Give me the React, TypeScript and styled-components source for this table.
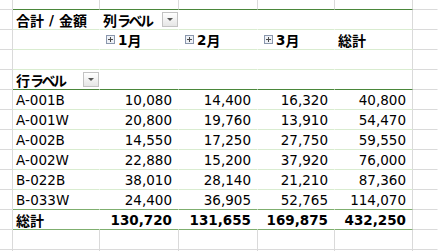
import styled, { createGlobalStyle } from "styled-components";

const GlobalStyle = createGlobalStyle`
  html, body {
    margin: 0;
    padding: 0;
    background: #ffffff;
    overflow: hidden;
  }
  body {
    font-family: "DejaVu Sans", "Noto Sans CJK JP", sans-serif;
    font-size: 13.5px;
    color: #000000;
  }
`;

type Line = "grid" | "light" | "dark" | "total";

const lineColors: Record<Line, string> = {
  grid: "#dadada",
  light: "#d9ecd0",
  dark: "#4a873a",
  total: "#7faf6f",
};

const Sheet = styled.div`
  width: 438px;
  height: 251px;
  overflow: hidden;
  display: flex;
  flex-direction: column;
`;

const Row = styled.div<{ $h: number }>`
  display: grid;
  grid-template-columns: 13px 87px 79px 79px 77px 78px 1fr;
  height: ${({ $h }) => $h}px;
  flex-shrink: 0;
`;

const Cell = styled.div<{
  $line: Line;
  $vline?: boolean;
  $align?: "left" | "right" | "split";
  $bold?: boolean;
}>`
  box-sizing: border-box;
  display: flex;
  align-items: center;
  justify-content: ${({ $align }) =>
    $align === "right" ? "flex-end" : $align === "split" ? "space-between" : "flex-start"};
  padding: ${({ $align }) => ($align === "right" ? "0 6px 0 0" : "0 0 0 3px")};
  border-bottom: 1px solid ${({ $line }) => lineColors[$line]};
  border-right: 1px solid ${({ $vline }) => ($vline ? lineColors.grid : "transparent")};
  font-weight: ${({ $bold }) => ($bold ? 700 : 400)};
  white-space: nowrap;
  overflow: visible;
  min-width: 0;
`;

const Jp = styled.span`
  font-family: "Noto Sans CJK JP", sans-serif;
  font-size: 14px;
  font-weight: 700;
  line-height: 1;
`;

const Kana = styled.span`
  letter-spacing: -2.5px;
  margin-right: 2px;
`;

const Slash = styled.span`
  font-family: "DejaVu Sans", sans-serif;
  font-weight: 700;
  padding: 0 5px;
`;

const Head = styled.span`
  display: flex;
  align-items: center;
  font-weight: 700;
`;

const DropButton = styled.span`
  box-sizing: border-box;
  width: 16px;
  height: 15px;
  margin-top: -1px;
  border: 1px solid #c3c3c3;
  background: linear-gradient(#ffffff, #e6e6e6);
  display: flex;
  align-items: center;
  justify-content: center;

  &::after {
    content: "";
    border-left: 3px solid transparent;
    border-right: 3px solid transparent;
    border-top: 3px solid #555555;
    margin-top: 1px;
  }
`;

const Expand = () => (
  <svg width="9" height="9" viewBox="0 0 9 9" style={{ margin: "0 3px 0 3px", flexShrink: 0 }}>
    <rect x="0.5" y="0.5" width="8" height="8" fill="#eef1f6" stroke="#8a97ad" />
    <path d="M2 4.5h5M4.5 2v5" stroke="#4a4a4a" strokeWidth="1" />
  </svg>
);

const data: [string, number, number, number, number][] = [
  ["A-001B", 10080, 14400, 16320, 40800],
  ["A-001W", 20800, 19760, 13910, 54470],
  ["A-002B", 14550, 17250, 27750, 59550],
  ["A-002W", 22880, 15200, 37920, 76000],
  ["B-022B", 38010, 28140, 21210, 87360],
  ["B-033W", 24400, 36905, 52765, 114070],
];

const totals = [130720, 131655, 169875, 432250];

const fmt = (n: number) => n.toLocaleString("en-US");

const GridRow = ({ h, line = "grid" }: { h: number; line?: Line }) => (
  <Row $h={h}>
    <Cell $line="grid" $vline />
    <Cell $line={line} $vline />
    <Cell $line={line} $vline />
    <Cell $line={line} $vline />
    <Cell $line={line} $vline />
    <Cell $line={line} $vline />
    <Cell $line="grid" />
  </Row>
);

const TableRow = ({ children }: { children: React.ReactNode }) => (
  <Row $h={20}>
    <Cell $line="grid" $vline />
    {children}
    <Cell $line="grid" />
  </Row>
);

export default function App() {
  return (
    <>
      <GlobalStyle />
      <Sheet>
        <GridRow h={10} line="dark" />

        <TableRow>
          <Cell $line="light">
            <Jp>合計</Jp>
            <Slash>/</Slash>
            <Jp>金額</Jp>
          </Cell>
          <Cell $line="light" $align="split">
            <Jp>
              列<Kana>ラベル</Kana>
            </Jp>
            <DropButton />
          </Cell>
          <Cell $line="light" />
          <Cell $line="light" />
          <Cell $line="light" $vline />
        </TableRow>

        <TableRow>
          <Cell $line="light" />
          {["1", "2", "3"].map((m) => (
            <Cell key={m} $line="light">
              <Expand />
              <Head>
                {m}
                <Jp>月</Jp>
              </Head>
            </Cell>
          ))}
          <Cell $line="light" $vline>
            <Jp>総計</Jp>
          </Cell>
        </TableRow>

        <TableRow>
          <Cell $line="light" />
          <Cell $line="light" />
          <Cell $line="light" />
          <Cell $line="light" />
          <Cell $line="light" $vline />
        </TableRow>

        <TableRow>
          <Cell $line="dark" $align="split">
            <Jp>
              行<Kana>ラベル</Kana>
            </Jp>
            <DropButton />
          </Cell>
          <Cell $line="dark" />
          <Cell $line="dark" />
          <Cell $line="dark" />
          <Cell $line="dark" $vline />
        </TableRow>

        {data.map(([label, ...nums], i) => {
          const line: Line = i === data.length - 1 ? "total" : "light";
          return (
            <TableRow key={label}>
              <Cell $line={line}>{label}</Cell>
              {nums.map((n, j) => (
                <Cell key={j} $line={line} $align="right" $vline={j === nums.length - 1}>
                  {fmt(n)}
                </Cell>
              ))}
            </TableRow>
          );
        })}

        <TableRow>
          <Cell $line="total">
            <Jp>総計</Jp>
          </Cell>
          {totals.map((n, j) => (
            <Cell key={j} $line="total" $align="right" $bold $vline={j === totals.length - 1}>
              {fmt(n)}
            </Cell>
          ))}
        </TableRow>

        <GridRow h={20} />
        <GridRow h={20} />
      </Sheet>
    </>
  );
}
